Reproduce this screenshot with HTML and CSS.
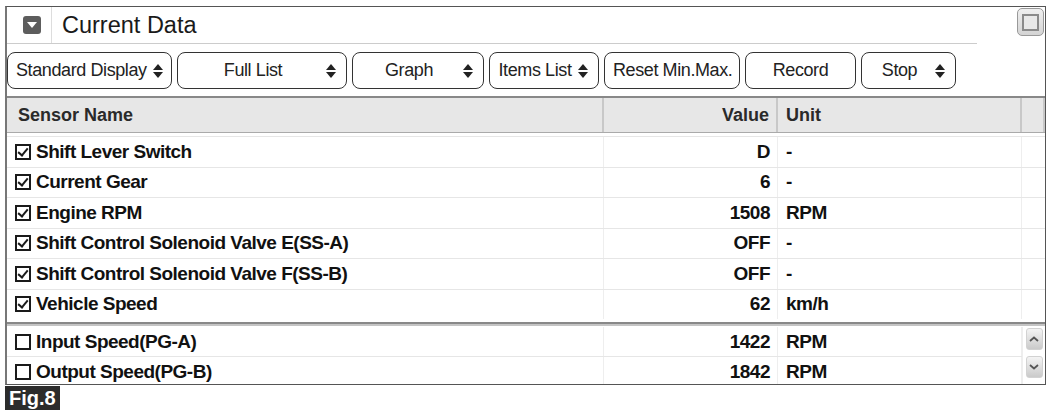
FILE: index.html
```html
<!DOCTYPE html>
<html lang="en">
<head>
<meta charset="UTF-8">
<title>Current Data</title>
<link rel="stylesheet" href="styles.css">
</head>
<body>
<div class="panel">
    <div class="panel-head">
        <div class="head-main">
            <div class="collapse-cell">
                <span class="collapse-btn">
                    <svg width="10" height="6" viewBox="0 0 10 6"><path d="M0 0 L10 0 L5 6 Z" fill="#fff"/></svg>
                </span>
            </div>
            <div class="head-title">Current Data</div>
        </div>
        <span class="restore-box"><span class="restore-inner"></span></span>
    </div>

    <div class="toolbar">
        <button class="tool w-standard"><span class="label">Standard Display</span><span class="spin"></span></button>
        <button class="tool w-full"><span class="label">Full List</span><span class="spin"></span></button>
        <button class="tool w-graph"><span class="label">Graph</span><span class="spin"></span></button>
        <button class="tool w-items"><span class="label">Items List</span><span class="spin"></span></button>
        <button class="tool w-reset"><span class="label">Reset Min.Max.</span></button>
        <button class="tool w-record"><span class="label">Record</span></button>
        <button class="tool w-stop"><span class="label">Stop</span><span class="spin"></span></button>
    </div>

    <div class="grid">
        <div class="row head">
            <div class="cell name">Sensor Name</div>
            <div class="cell value">Value</div>
            <div class="cell unit">Unit</div>
            <div class="cell spare"></div>
        </div>

        <div class="fixed-rows">
            <div class="row">
                <div class="cell name"><span class="check on"></span>Shift Lever Switch</div>
                <div class="cell value">D</div>
                <div class="cell unit">-</div>
                <div class="cell spare"></div>
            </div>
            <div class="row">
                <div class="cell name"><span class="check on"></span>Current Gear</div>
                <div class="cell value">6</div>
                <div class="cell unit">-</div>
                <div class="cell spare"></div>
            </div>
            <div class="row">
                <div class="cell name"><span class="check on"></span>Engine RPM</div>
                <div class="cell value">1508</div>
                <div class="cell unit">RPM</div>
                <div class="cell spare"></div>
            </div>
            <div class="row">
                <div class="cell name"><span class="check on"></span>Shift Control Solenoid Valve E(SS-A)</div>
                <div class="cell value">OFF</div>
                <div class="cell unit">-</div>
                <div class="cell spare"></div>
            </div>
            <div class="row">
                <div class="cell name"><span class="check on"></span>Shift Control Solenoid Valve F(SS-B)</div>
                <div class="cell value">OFF</div>
                <div class="cell unit">-</div>
                <div class="cell spare"></div>
            </div>
            <div class="row">
                <div class="cell name"><span class="check on"></span>Vehicle Speed</div>
                <div class="cell value">62</div>
                <div class="cell unit">km/h</div>
                <div class="cell spare"></div>
            </div>
        </div>

        <div class="scroll-rows">
            <div class="scroll-list">
                <div class="row">
                    <div class="cell name"><span class="check"></span>Input Speed(PG-A)</div>
                    <div class="cell value">1422</div>
                    <div class="cell unit">RPM</div>
                </div>
                <div class="row">
                    <div class="cell name"><span class="check"></span>Output Speed(PG-B)</div>
                    <div class="cell value">1842</div>
                    <div class="cell unit">RPM</div>
                </div>
            </div>
            <div class="scrollbar">
                <span class="scroll-btn">
                    <svg width="10" height="6" viewBox="0 0 10 6"><path d="M1 5 L5 1.5 L9 5" fill="none" stroke="#555" stroke-width="1.8"/></svg>
                </span>
                <span class="scroll-btn">
                    <svg width="10" height="6" viewBox="0 0 10 6"><path d="M1 1 L5 4.5 L9 1" fill="none" stroke="#555" stroke-width="1.8"/></svg>
                </span>
            </div>
        </div>
    </div>
</div>
<div class="fig">Fig.8</div>
</body>
</html>
```

FILE: styles.css
```css
/* Basic styling */
body {
    margin: 0;
    padding: 0;
    background-color: #fff;
    font-family: "Liberation Sans", Arial, sans-serif;
    color: #111;
}
.panel {
    margin: 6px 4px 0 5px;
    border: 1px solid #555;
    border-left: 2px solid #777;
    height: 377px;
    overflow: hidden;
}

/* header */
.panel-head {
    display: flex;
    align-items: flex-start;
    height: 37px;
}
.head-main {
    display: flex;
    align-items: center;
    width: 970px;
    height: 36px;
    border-bottom: 1px solid #ccc;
}
.collapse-cell {
    width: 45px;
    height: 36px;
    border-right: 1px solid #ddd;
    display: flex;
    align-items: center;
    padding-left: 16px;
    box-sizing: border-box;
}
.collapse-btn {
    width: 18px;
    height: 18px;
    border-radius: 3px;
    background-color: #5d5d5d;
    display: flex;
    align-items: center;
    justify-content: center;
}
.head-title {
    padding-left: 10px;
    font-size: 23.5px;
    color: #1a1a1a;
}
.restore-box {
    margin-left: auto;
    margin-top: 1px;
    margin-right: 1px;
    width: 27px;
    height: 28px;
    border: 1px solid #999;
    border-radius: 5px;
    background: linear-gradient(#efefef, #d4d4d4);
    display: flex;
    align-items: center;
    justify-content: center;
    box-sizing: border-box;
}
.restore-inner {
    width: 17px;
    height: 17px;
    border: 2px solid #8a8a8a;
    background-color: #e8e8e8;
    box-sizing: border-box;
}

/* toolbar */
.toolbar {
    display: flex;
    gap: 5px;
    padding: 8px 0 7px 0;
    height: 37px;
}
.tool {
    display: flex;
    align-items: center;
    height: 37px;
    padding: 0 8px;
    border: 1px solid #333;
    border-radius: 8px;
    background-color: #fff;
    font-family: inherit;
    font-size: 18px;
    letter-spacing: -0.4px;
    color: #222;
}
.tool .label {
    flex: 1;
    text-align: center;
    white-space: nowrap;
}
.spin {
    width: 10px;
    height: 14px;
    margin-left: 6px;
    margin-right: 2px;
    position: relative;
}
.spin::before,
.spin::after {
    content: "";
    position: absolute;
    left: 0;
    border-left: 5px solid transparent;
    border-right: 5px solid transparent;
}
.spin::before {
    top: 0;
    border-bottom: 6px solid #222;
}
.spin::after {
    bottom: 0;
    border-top: 6px solid #222;
}
.w-standard { width: 165px; }
.w-full { width: 170px; }
.w-graph { width: 132px; }
.w-items { width: 110px; }
.w-reset { width: 136px; }
.w-record { width: 111px; }
.w-stop { width: 95px; }

/* grid */
.grid {
    border-top: 2px solid #888;
}
.row {
    display: grid;
    grid-template-columns: 597px 174px 244px 1fr;
    height: 29.5px;
    border-bottom: 1px solid #e6e6e6;
    font-weight: bold;
    font-size: 19px;
    letter-spacing: -0.5px;
}
.row.head {
    height: 34px;
    background-color: #e7e7e7;
    border-bottom: 1px solid #aaa;
    font-size: 18px;
    letter-spacing: 0;
    color: #2a2a2a;
}
.cell {
    display: flex;
    align-items: center;
    border-right: 1px solid #eee;
    white-space: nowrap;
}
.row.head .cell {
    border-right: 2px solid #c8c8c8;
}
.cell.name {
    padding-left: 8px;
}
.row.head .cell.name {
    padding-left: 11px;
}
.cell.value {
    justify-content: flex-end;
    padding-right: 7px;
}
.cell.unit {
    padding-left: 8px;
}
.cell.spare {
    border-right: none;
}
.check {
    width: 16px;
    height: 16px;
    border: 2px solid #1a1a1a;
    box-sizing: border-box;
    margin-right: 5px;
    position: relative;
}
.check.on::after {
    content: "";
    position: absolute;
    left: 3px;
    top: 0;
    width: 4px;
    height: 8px;
    border-right: 2.5px solid #1a1a1a;
    border-bottom: 2.5px solid #1a1a1a;
    transform: rotate(40deg);
}
.fixed-rows {
    margin-top: 3px;
    border-top: 1px solid #e6e6e6;
}
.fixed-rows .row:last-child {
    border-bottom: none;
}
.scroll-rows {
    display: flex;
    margin-top: 3px;
    border-top: 2px solid #888;
    box-shadow: inset 0 2px 0 #c4c4c4;
    padding-top: 3px;
}
.scroll-list {
    flex: 1;
}
.scroll-list .row {
    grid-template-columns: 597px 174px 244px;
    height: 29px;
}
.scroll-list .row:last-child {
    border-bottom: none;
}
.scrollbar {
    width: 23px;
    border-left: 1px solid #eee;
    display: flex;
    flex-direction: column;
    align-items: center;
    gap: 6px;
    padding-top: 1px;
}
.scroll-btn {
    width: 17px;
    height: 22px;
    border: 1px solid #d2d2d2;
    border-radius: 3px;
    background: linear-gradient(#f4f4f4, #cacaca);
    display: flex;
    align-items: center;
    justify-content: center;
    box-sizing: border-box;
}

/* caption */
.fig {
    display: inline-block;
    margin: 1px 0 0 5px;
    padding: 0 4px;
    height: 24px;
    line-height: 24px;
    background-color: #2c2c2c;
    color: #fff;
    font-weight: bold;
    font-size: 20px;
}
```
